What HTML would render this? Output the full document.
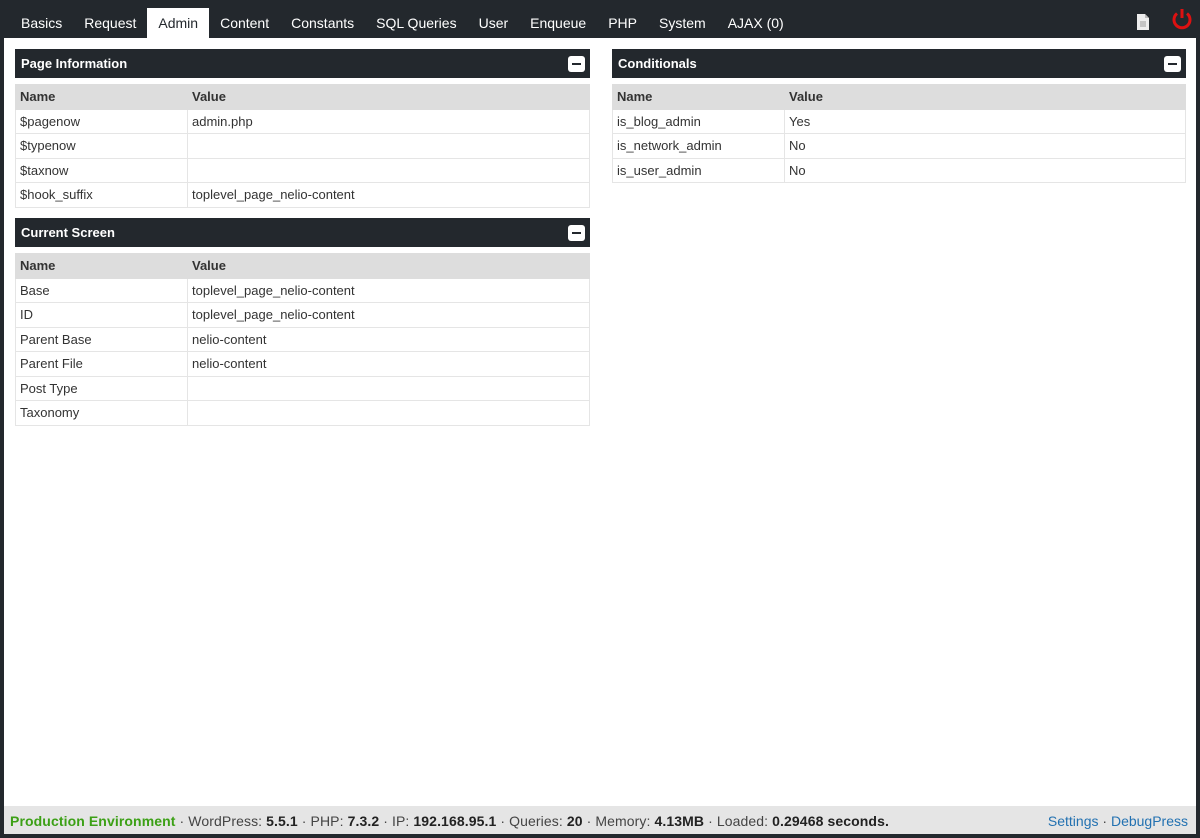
<!DOCTYPE html>
<html><head><meta charset="utf-8"><style>
*{box-sizing:border-box;margin:0;padding:0}
body{width:1200px;height:838px;background:#23282d;font-family:"Liberation Sans",sans-serif;position:relative;overflow:hidden}
.tabs{position:absolute;left:10px;top:8px;height:30px;display:flex}
.tab{color:#fff;font-size:14px;padding:0 11px;line-height:30px;height:30px}
.tab.on{background:#fff;color:#23282d;}
.main{position:absolute;left:4px;top:38px;width:1192px;height:768px;background:#fff}
.foot{position:absolute;left:4px;top:806px;width:1192px;height:28px;background:#e5e5e5;font-size:14px;color:#444;line-height:30px;padding-left:6px;letter-spacing:.1px}
.foot b{color:#222;font-weight:bold}
.foot .g{color:#3ca016;font-weight:bold}
.foot .r{position:absolute;right:8px;top:0;color:#2271b1;letter-spacing:0}
.panel{position:absolute}
.hd{background:#23282d;color:#fff;font-weight:bold;font-size:13px;height:29px;line-height:28px;padding-left:5px;border:1px solid #23282d;position:relative}
.hd i{position:absolute;right:4px;top:6px;width:17px;height:16px;background:#fff;border-radius:3px}
.hd i:after{content:"";position:absolute;left:4px;top:7px;width:9px;height:2px;background:#23282d}
table{border-collapse:collapse;width:100%;margin-top:6px;font-size:13px;color:#333}
td,th{border:1px solid #e5e5e5;height:24.5px;padding:0 4px;text-align:left}
th{background:#ddd;font-weight:bold;border-color:#ddd}
td:first-child,th:first-child{width:172px}
</style></head><body>
<div class="tabs">
<div class="tab">Basics</div><div class="tab">Request</div><div class="tab on">Admin</div><div class="tab">Content</div><div class="tab">Constants</div><div class="tab">SQL Queries</div><div class="tab">User</div><div class="tab">Enqueue</div><div class="tab">PHP</div><div class="tab">System</div><div class="tab">AJAX (0)</div>
</div>
<svg style="position:absolute;left:1136px;top:13px" width="14" height="18" viewBox="0 0 14 18"><path d="M1 1h8l4 4v12H1z" fill="#eee"/><path d="M9 1v4h4" fill="#bbb"/><path d="M4 9h6M4 11h6M4 13h6" stroke="#999" stroke-width="1"/></svg>
<svg style="position:absolute;left:1171px;top:8px" width="22" height="22" viewBox="0 0 22 22"><path d="M6 5.5A8 8 0 1 0 16 5.5" fill="none" stroke="#d11" stroke-width="3"/><path d="M11 1v9" stroke="#d11" stroke-width="3"/></svg>
<div class="main"></div>
<div class="panel" style="left:15px;top:49px;width:575px">
<div class="hd">Page Information<i></i></div>
<table><tr><th>Name</th><th>Value</th></tr>
<tr><td>$pagenow</td><td>admin.php</td></tr>
<tr><td>$typenow</td><td></td></tr>
<tr><td>$taxnow</td><td></td></tr>
<tr><td>$hook_suffix</td><td>toplevel_page_nelio-content</td></tr></table>
</div>
<div class="panel" style="left:15px;top:218px;width:575px">
<div class="hd">Current Screen<i></i></div>
<table><tr><th>Name</th><th>Value</th></tr>
<tr><td>Base</td><td>toplevel_page_nelio-content</td></tr>
<tr><td>ID</td><td>toplevel_page_nelio-content</td></tr>
<tr><td>Parent Base</td><td>nelio-content</td></tr>
<tr><td>Parent File</td><td>nelio-content</td></tr>
<tr><td>Post Type</td><td></td></tr>
<tr><td>Taxonomy</td><td></td></tr></table>
</div>
<div class="panel" style="left:612px;top:49px;width:574px">
<div class="hd">Conditionals<i></i></div>
<table><tr><th>Name</th><th>Value</th></tr>
<tr><td>is_blog_admin</td><td>Yes</td></tr>
<tr><td>is_network_admin</td><td>No</td></tr>
<tr><td>is_user_admin</td><td>No</td></tr></table>
</div>
<div class="foot"><span class="g">Production Environment</span> · WordPress: <b>5.5.1</b> · PHP: <b>7.3.2</b> · IP: <b>192.168.95.1</b> · Queries: <b>20</b> · Memory: <b>4.13MB</b> · Loaded: <b>0.29468 seconds.</b><span class="r">Settings <span style="color:#444">·</span> DebugPress</span></div>
</body></html>
